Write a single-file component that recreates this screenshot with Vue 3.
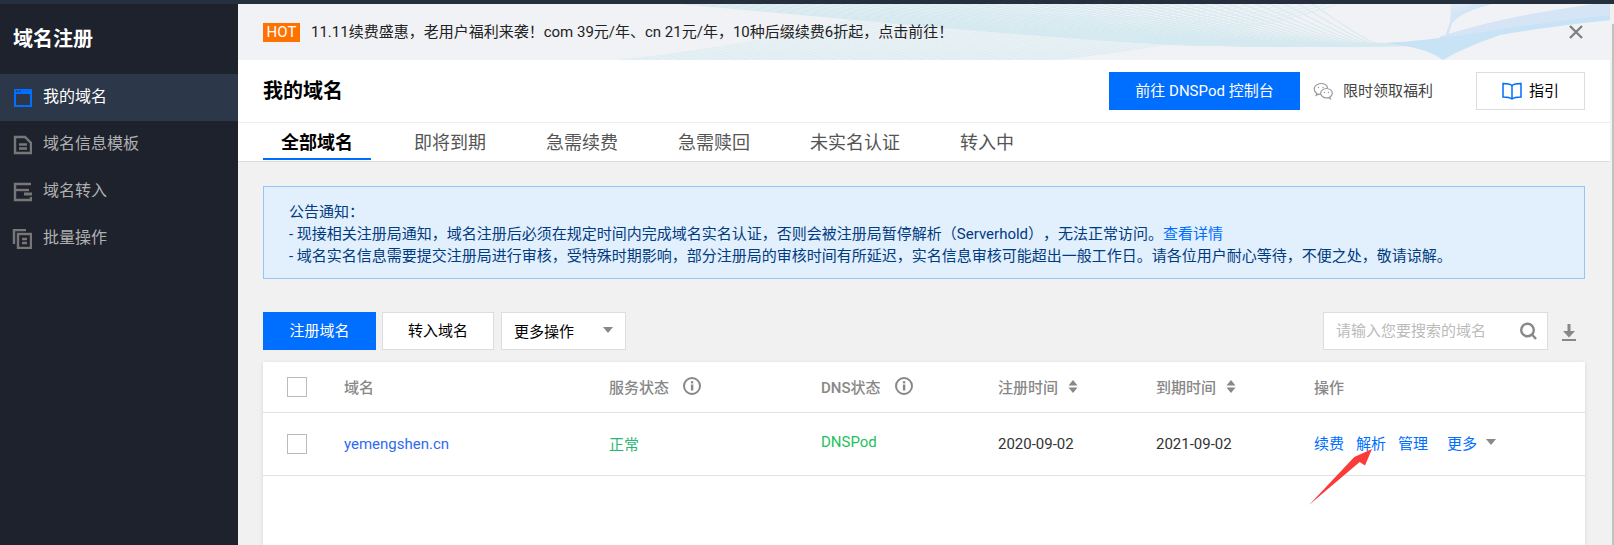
<script setup>
const menu = [
  { label: '我的域名', icon: 'window', active: true },
  { label: '域名信息模板', icon: 'doc' },
  { label: '域名转入', icon: 'transfer' },
  { label: '批量操作', icon: 'stack' }
]
const tabs = ['全部域名', '即将到期', '急需续费', '急需赎回', '未实名认证', '转入中']

const range = n => Array.from({ length: n }, (_, i) => i)
const meshA = range(46).map(i => {
  const x = 640 + i * 14.8
  const end = 1150 + i * 5
  const dx = end - x
  return `M${x} 0C${x + dx * 0.4} 18 ${x + dx * 0.75} 36 ${end} 43C${end + 60} 48 1390 46 1450 ${40 - i * 0.04}`
})
const meshB = range(40).map(i => {
  const x = 620 + i * 11
  return `M${x} 60C${x + 120} 48 ${x + 240} 22 ${x + 300} 0`
})
const fanC = range(40).map(i =>
  `M1440 ${38 - i * 0.02}C1500 ${30 - i * 0.3} 1550 ${22 - i * 0.3} 1612 ${18 - i * 0.4}`
)
const fanD = range(26).map(i =>
  `M1446 ${40 - i * 0.1}C1450 ${28 - i * 0.3} 1452 ${18 - i * 0.2} ${1451 + i * 2.2} 0`
)
</script>

<template>
  <div class="page">
    <div class="topline"></div>
    <div class="body">
      <aside class="side">
        <div class="brand">域名注册</div>
        <nav class="nav">
          <a v-for="m in menu" :key="m.label" class="nav-item" :class="{ on: m.active }">
            <svg class="nav-ico" width="20" height="20" viewBox="0 0 20 20">
              <g v-if="m.icon === 'window'">
                <rect x="2" y="1" width="18" height="18" fill="#006eff" />
                <rect x="4" y="6" width="14" height="11" fill="#2c3749" />
                <rect x="4" y="2.5" width="1.5" height="1.5" fill="#2c3749" />
                <rect x="7" y="2.5" width="1.5" height="1.5" fill="#2c3749" />
              </g>
              <g v-else-if="m.icon === 'doc'" fill="none" stroke="#777" stroke-width="2.4">
                <path d="M3 2h10l6 6v10H3z" />
                <path d="M7 9.5h8M7 13.5h8" />
              </g>
              <g v-else-if="m.icon === 'transfer'" fill="none" stroke="#777" stroke-width="2.4">
                <path d="M19 2H3v16h16v-3" />
                <path d="M3 8h14" />
                <path d="M12 12h8" stroke-width="3" />
              </g>
              <g v-else fill="none" stroke="#777" stroke-width="2.4">
                <path d="M14 1H2v14" />
                <rect x="6" y="5" width="13" height="14" />
                <path d="M10 10h5M10 14h5" />
              </g>
            </svg>
            <span class="nav-text">{{ m.label }}</span>
          </a>
        </nav>
      </aside>

      <main class="main">
        <section class="promo">
          <svg class="wave" width="1372" height="56" viewBox="238 4 1372 56" preserveAspectRatio="none">
            <g fill="none" stroke="#cde8f0" stroke-width="1" opacity=".8">
              <path v-for="(d, i) in meshA" :key="'a' + i" :d="d" />
            </g>
            <g fill="none" stroke="#d6edf3" stroke-width="1" opacity=".75">
              <path v-for="(d, i) in meshB" :key="'b' + i" :d="d" />
            </g>
            <g fill="none" stroke="#cfe3f5" stroke-width="1" opacity=".8">
              <path v-for="(d, i) in fanC" :key="'c' + i" :d="d" />
            </g>
            <g fill="none" stroke="#cfe5f6" stroke-width="1" opacity=".85">
              <path v-for="(d, i) in fanD" :key="'d' + i" :d="d" />
            </g>
            <path d="M1443 60C1460 50 1480 42 1500 35C1540 28 1580 23 1612 20L1612 15C1560 20 1510 28 1470 34C1440 38 1410 42 1385 43C1410 46 1430 50 1443 60Z" fill="#c8e2f6" />
          </svg>
          <span class="hot">HOT</span>
          <span class="promo-text">11.11续费盛惠，老用户福利来袭！com 39元/年、cn 21元/年，10种后缀续费6折起，点击前往！</span>
          <svg class="close" width="16" height="16" viewBox="0 0 16 16">
            <path d="M2 2l12 12M14 2L2 14" stroke="#808080" stroke-width="2.4" fill="none" />
          </svg>
        </section>

        <header class="head">
          <h1>我的域名</h1>
          <div class="head-actions">
            <button class="btn primary dns">前往 DNSPod 控制台</button>
            <span class="gift">
              <svg width="21" height="19" viewBox="0 0 21 19" fill="none" stroke="#999" stroke-width="1.2">
                <path d="M8 1.5c-3.700 0-6.800 2.500-6.800 5.600 0 1.800 1 3.300 2.600 4.300l-.6 1.900 2.300-1.200c.8.200 1.500.3 2.300.3" />
                <path d="M8 1.500c3.200 0 6 1.900 6.600 4.500" />
                <path d="M13.500 6.500c-3.200 0-5.800 2.100-5.800 4.700s2.600 4.700 5.800 4.700c.7 0 1.300-.1 1.900-.3l1.900 1.100-.5-1.700c1.500-.9 2.500-2.200 2.500-3.800 0-2.600-2.600-4.700-5.800-4.700z" />
                <circle cx="5.500" cy="5.500" r=".7" fill="#999" stroke="none" />
                <circle cx="10" cy="5.500" r=".7" fill="#999" stroke="none" />
                <circle cx="11.500" cy="10.500" r=".7" fill="#999" stroke="none" />
                <circle cx="15.500" cy="10.500" r=".7" fill="#999" stroke="none" />
              </svg>
              <span class="gift-text">限时领取福利</span>
            </span>
            <button class="btn guide">
              <svg width="20" height="18" viewBox="0 0 20 18" fill="none" stroke="#006eff" stroke-width="1.500">
                <path d="M10 3.500C8 1.800 4.500 1.500 1 1.500v13.500c3.500 0 7 .3 9 2 2-1.700 5.500-2 9-2V1.500c-3.500 0-7 .3-9 2z" />
                <path d="M10 3.500V17" />
              </svg>
              <span class="gift-text">指引</span>
            </button>
          </div>
        </header>

        <nav class="tabs">
          <a v-for="(t, i) in tabs" :key="t" class="tab" :class="{ on: i === 0 }">{{ t }}</a>
        </nav>

        <div class="content">
          <section class="notice">
            <p>公告通知：</p>
            <p>- 现接相关注册局通知，域名注册后必须在规定时间内完成域名实名认证，否则会被注册局暂停解析（Serverhold），无法正常访问。<a>查看详情</a></p>
            <p>- 域名实名信息需要提交注册局进行审核，受特殊时期影响，部分注册局的审核时间有所延迟，实名信息审核可能超出一般工作日。请各位用户耐心等待，不便之处，敬请谅解。</p>
          </section>

          <div class="toolbar">
            <button class="btn primary reg">注册域名</button>
            <button class="btn move">转入域名</button>
            <button class="btn more">
              <span>更多操作</span>
              <i class="caret"></i>
            </button>
            <div class="spacer"></div>
            <div class="search">
              <span class="search-text">请输入您要搜索的域名</span>
              <svg width="19" height="18" viewBox="0 0 19 18" fill="none" stroke="#888" stroke-width="2.4">
                <circle cx="8.500" cy="8" r="6.300" />
                <path d="M13 12.500l4 4.500" />
              </svg>
            </div>
            <svg class="dl" width="14" height="17" viewBox="0 0 14 17" fill="#888">
              <path d="M5.500 0h3v7H13l-6 6.500L1 7h4.500z" />
              <rect y="15" width="14" height="2" />
            </svg>
          </div>

          <div class="table">
            <div class="tr th">
              <div><i class="check"></i></div>
              <div>域名</div>
              <div class="cell-ico">服务状态
                <svg class="info" width="18" height="18" viewBox="0 0 18 18">
                  <circle cx="9" cy="9" r="8" fill="none" stroke="#888" stroke-width="2" />
                  <rect x="7.900" y="7.500" width="2.400" height="6" fill="#888" />
                  <rect x="7.900" y="4.200" width="2.400" height="2.200" fill="#888" />
                </svg>
              </div>
              <div class="cell-ico">DNS状态
                <svg class="info" width="18" height="18" viewBox="0 0 18 18">
                  <circle cx="9" cy="9" r="8" fill="none" stroke="#888" stroke-width="2" />
                  <rect x="7.900" y="7.500" width="2.400" height="6" fill="#888" />
                  <rect x="7.900" y="4.200" width="2.400" height="2.200" fill="#888" />
                </svg>
              </div>
              <div class="cell-ico">注册时间
                <svg class="sort" width="10" height="13" viewBox="0 0 10 13" fill="#888"><path d="M5 0l4.500 5.500h-9zM5 13L.5 7.500h9z" /></svg>
              </div>
              <div class="cell-ico">到期时间
                <svg class="sort" width="10" height="13" viewBox="0 0 10 13" fill="#888"><path d="M5 0l4.500 5.500h-9zM5 13L.5 7.500h9z" /></svg>
              </div>
              <div>操作</div>
            </div>
            <div class="tr td">
              <div><i class="check"></i></div>
              <div class="domain">yemengshen.cn</div>
              <div class="ok">正常</div>
              <div class="dns-ok">DNSPod</div>
              <div>2020-09-02</div>
              <div>2021-09-02</div>
              <div class="ops">
                <a>续费</a><a>解析</a><a>管理</a><a class="op-more">更多</a><i class="caret small"></i>
                <svg class="arrow" width="66" height="58" viewBox="0 0 66 58">
                  <path d="M1 57L46.300 9 64 1 57 17.500 51.700 14z" fill="#fb3a3a" />
                </svg>
              </div>
            </div>
          </div>
        </div>
      </main>

      <div class="scroll"><div class="thumb"></div></div>
    </div>
  </div>
</template>

<style>
html, body { margin: 0; overflow: hidden; }
</style>

<style scoped>
.page {
  width: 1614px;
  height: 545px;
  overflow: hidden;
  display: flex;
  flex-direction: column;
  font-family: Roboto, "Noto Sans CJK SC", sans-serif;
  font-size: 15px;
  color: #000;
  background: #f1f1f1;
  text-spacing-trim: space-all;
}
.topline { height: 4px; flex: none; background: #262f3e; }
.body { flex: 1; display: flex; min-height: 0; }

.side { width: 238px; flex: none; background: #1e222d; }
.brand {
  height: 70px;
  line-height: 70px;
  padding-left: 13px;
  font-size: 20px;
  font-weight: 700;
  color: #fff;
}
.nav-item {
  height: 47px;
  display: flex;
  align-items: center;
  padding-left: 12px;
  gap: 11px;
  font-size: 16px;
  color: #b0b0b0;
}
.nav-text { padding-bottom: 5px; }
.nav-item.on { background: #2c3749; color: #fff; }
.nav-ico { flex: none; }

.main { flex: 1; min-width: 0; display: flex; flex-direction: column; }

.promo {
  position: relative;
  height: 56px;
  flex: none;
  display: flex;
  align-items: center;
  padding: 0 25px;
  background: #f1f2f5;
  overflow: hidden;
}
.wave { position: absolute; left: 0; top: 0; }
.hot {
  position: relative;
  width: 37px;
  height: 19px;
  line-height: 19px;
  text-align: center;
  background: #ff7200;
  color: #fff;
  font-size: 15px;
  margin-right: 11px;
}
.promo-text { position: relative; font-size: 15px; color: #222; white-space: nowrap; padding-bottom: 3px; }
.close { position: absolute; right: 26px; top: 20px; }

.head {
  height: 62px;
  flex: none;
  display: flex;
  align-items: center;
  justify-content: space-between;
  padding: 0 25px;
  background: #fff;
  border-bottom: 1px solid #eee;
}
.head h1 { margin: 0; font-size: 20px; font-weight: 700; line-height: 1; }
.head-actions { display: flex; align-items: center; }

.btn {
  height: 38px;
  padding: 0 0 4px;
  font: inherit;
  color: #000;
  background: #fff;
  border: 1px solid #ddd;
  border-radius: 0;
  box-sizing: border-box;
}
.btn.primary { background: #006eff; border-color: #006eff; color: #fff; }
.dns { width: 191px; }
.gift {
  display: flex;
  align-items: center;
  gap: 9px;
  width: 176px;
  box-sizing: border-box;
  padding-left: 13px;
  color: #444;
}
.gift-text { padding-bottom: 3px; }
.guide {
  width: 109px;
  display: flex;
  align-items: center;
  justify-content: center;
  gap: 7px;
  padding: 0;
}

.tabs {
  height: 38px;
  flex: none;
  display: flex;
  padding-left: 25px;
  background: #fff;
  border-bottom: 1px solid #ddd;
}
.tab {
  height: 37px;
  box-sizing: border-box;
  padding: 2px 18px 0;
  margin-right: 24px;
  font-size: 18px;
  line-height: 36px;
  color: #555;
  border-bottom: 2px solid transparent;
}
.tab.on { font-weight: 700; color: #000; border-bottom-color: #006eff; margin-right: 25px; }

.content { flex: 1; min-height: 0; padding: 24px 25px 0; display: flex; flex-direction: column; }

.notice {
  height: 93px;
  flex: none;
  box-sizing: border-box;
  padding: 14px 25px 0;
  background: #e2effd;
  border: 1px solid #97c5fb;
  color: #003b80;
  line-height: 22px;
  white-space: nowrap;
}
.notice p { margin: 0; }
.notice a { color: #006eff; }

.toolbar { display: flex; align-items: center; margin-top: 33px; flex: none; }
.reg { width: 113px; }
.move { width: 112px; margin-left: 6px; }
.more {
  width: 125px;
  margin-left: 7px;
  display: flex;
  align-items: center;
  justify-content: space-between;
  padding: 0 12px 2px;
}
.caret {
  display: block;
  width: 0;
  height: 0;
  border-left: 5px solid transparent;
  border-right: 5px solid transparent;
  border-top: 6px solid #888;
}
.spacer { flex: 1; }
.search {
  width: 225px;
  height: 38px;
  box-sizing: border-box;
  display: flex;
  align-items: center;
  justify-content: space-between;
  padding: 0 9px 0 12px;
  background: #fff;
  border: 1px solid #ddd;
  color: #bbb;
}
.search-text { padding-bottom: 3px; }
.dl { margin-left: 14px; margin-right: 9px; margin-top: 3px; }

.table {
  flex: 1;
  margin-top: 12px;
  background: #fff;
  box-shadow: 0 1px 4px rgba(0, 0, 0, .12);
}
.tr {
  display: grid;
  grid-template-columns: 81px 265px 212px 177px 158px 158px 1fr;
  align-items: center;
  border-bottom: 1px solid #e2e2e2;
  box-sizing: border-box;
}
.tr > div:first-child { padding-left: 24px; }
.th { height: 51px; color: #888; font-weight: 500; padding-bottom: 2px; }
.td { height: 63px; color: #333; }
.check {
  display: block;
  width: 20px;
  height: 20px;
  box-sizing: border-box;
  border: 1px solid #bbb;
}
.th .check { margin-top: 2px; }
.cell-ico { display: flex; align-items: center; }
.info { margin-left: 14px; }
.sort { margin-left: 10px; }
.domain { color: #2f6bf0; }
.ok { color: #2bb673; margin-top: -2px; }
.dns-ok { color: #1fc15e; margin-top: -4px; }
.ops { position: relative; display: flex; align-items: center; color: #006eff; margin-top: -4px; }
.ops a { margin-right: 12px; }
.ops a.op-more { margin-left: 7px; margin-right: 9px; }
.caret.small { border-top-width: 6px; margin-top: -1px; }
.arrow { position: absolute; left: -6px; top: 16px; }

.scroll { width: 4px; flex: none; background: #f1f1f1; padding-top: 20px; box-sizing: border-box; }
.thumb { width: 2.500px; height: 100%; margin-left: 1.500px; background: #c1c1c1; }
</style>
